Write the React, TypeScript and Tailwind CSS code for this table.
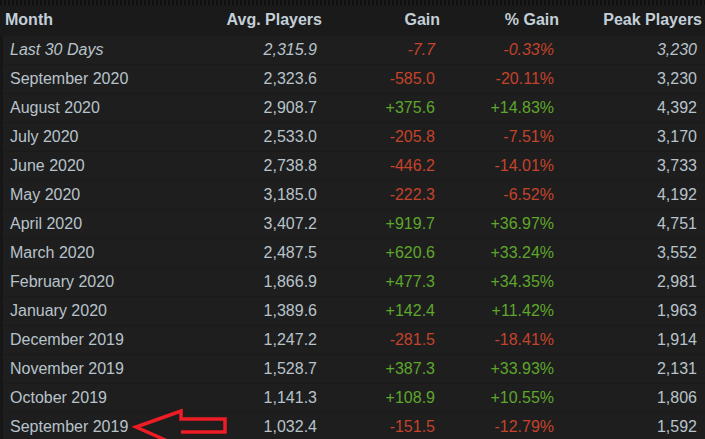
import React from 'react';

type Row = {
    month: string;
    avg: string;
    gain: string;
    pct: string;
    peak: string;
    italic?: boolean;
};

const rows: Row[] = [
    { month: 'Last 30 Days', avg: '2,315.9', gain: '-7.7', pct: '-0.33%', peak: '3,230', italic: true },
    { month: 'September 2020', avg: '2,323.6', gain: '-585.0', pct: '-20.11%', peak: '3,230' },
    { month: 'August 2020', avg: '2,908.7', gain: '+375.6', pct: '+14.83%', peak: '4,392' },
    { month: 'July 2020', avg: '2,533.0', gain: '-205.8', pct: '-7.51%', peak: '3,170' },
    { month: 'June 2020', avg: '2,738.8', gain: '-446.2', pct: '-14.01%', peak: '3,733' },
    { month: 'May 2020', avg: '3,185.0', gain: '-222.3', pct: '-6.52%', peak: '4,192' },
    { month: 'April 2020', avg: '3,407.2', gain: '+919.7', pct: '+36.97%', peak: '4,751' },
    { month: 'March 2020', avg: '2,487.5', gain: '+620.6', pct: '+33.24%', peak: '3,552' },
    { month: 'February 2020', avg: '1,866.9', gain: '+477.3', pct: '+34.35%', peak: '2,981' },
    { month: 'January 2020', avg: '1,389.6', gain: '+142.4', pct: '+11.42%', peak: '1,963' },
    { month: 'December 2019', avg: '1,247.2', gain: '-281.5', pct: '-18.41%', peak: '1,914' },
    { month: 'November 2019', avg: '1,528.7', gain: '+387.3', pct: '+33.93%', peak: '2,131' },
    { month: 'October 2019', avg: '1,141.3', gain: '+108.9', pct: '+10.55%', peak: '1,806' },
    { month: 'September 2019', avg: '1,032.4', gain: '-151.5', pct: '-12.79%', peak: '1,592' },
];

// red annotation arrow pointing at the last row
function Arrow() {
    return (
        <svg
            width="100"
            height="40"
            viewBox="0 0 100 40"
            className="absolute left-[128px] top-[-4px] overflow-visible"
        >
            <path
                d="M50 38 L5 18 L50 2 L50 10 L94 10 L94 23 L50 23"
                fill="none"
                stroke="#ee1c25"
                strokeWidth="3.5"
                strokeLinejoin="miter"
            />
        </svg>
    );
}

export default function App() {
    return (
        <div className="h-[439px] w-[705px] overflow-hidden bg-[#1a1a1a] font-['Liberation_Sans',Arial,sans-serif] text-[16px] text-[#b8c3cb]">
            <div className="h-[5px] bg-[repeating-linear-gradient(90deg,#101010_0px,#101010_2px,#1c1c1c_2px,#1c1c1c_4px)]" />
            <div className="flex h-[30px] items-center font-bold text-[#c3cfd8]">
                <div className="w-[205px] pl-[5px]">Month</div>
                <div className="w-[122px] pr-[5px] text-right">Avg. Players</div>
                <div className="w-[118px] pr-[5px] text-right">Gain</div>
                <div className="w-[119px] pr-[5px] text-right">% Gain</div>
                <div className="w-[141px] pr-[3px] text-right">Peak Players</div>
            </div>
            <div className="border-l-[3px] border-[#161616]">
                {rows.map((r, i) => {
                    const up = r.gain.startsWith('+');
                    const color = up ? 'text-[#5ea62c]' : 'text-[#c4432b]';
                    return (
                        <div
                            key={r.month}
                            className={`relative flex h-[29px] items-center border-t border-[#1a1a1a] bg-[#1e1e1e] ${
                                r.italic ? 'italic' : ''
                            }`}
                        >
                            <div className="w-[202px] pl-[7px]">{r.month}</div>
                            <div className="w-[122px] pr-[10px] text-right">{r.avg}</div>
                            <div className={`w-[118px] pr-[10px] text-right ${color}`}>{r.gain}</div>
                            <div className={`w-[119px] pr-[10px] text-right ${color}`}>{r.pct}</div>
                            <div className="w-[141px] pr-[8px] text-right">{r.peak}</div>
                            {i === rows.length - 1 && <Arrow />}
                        </div>
                    );
                })}
            </div>
        </div>
    );
}
